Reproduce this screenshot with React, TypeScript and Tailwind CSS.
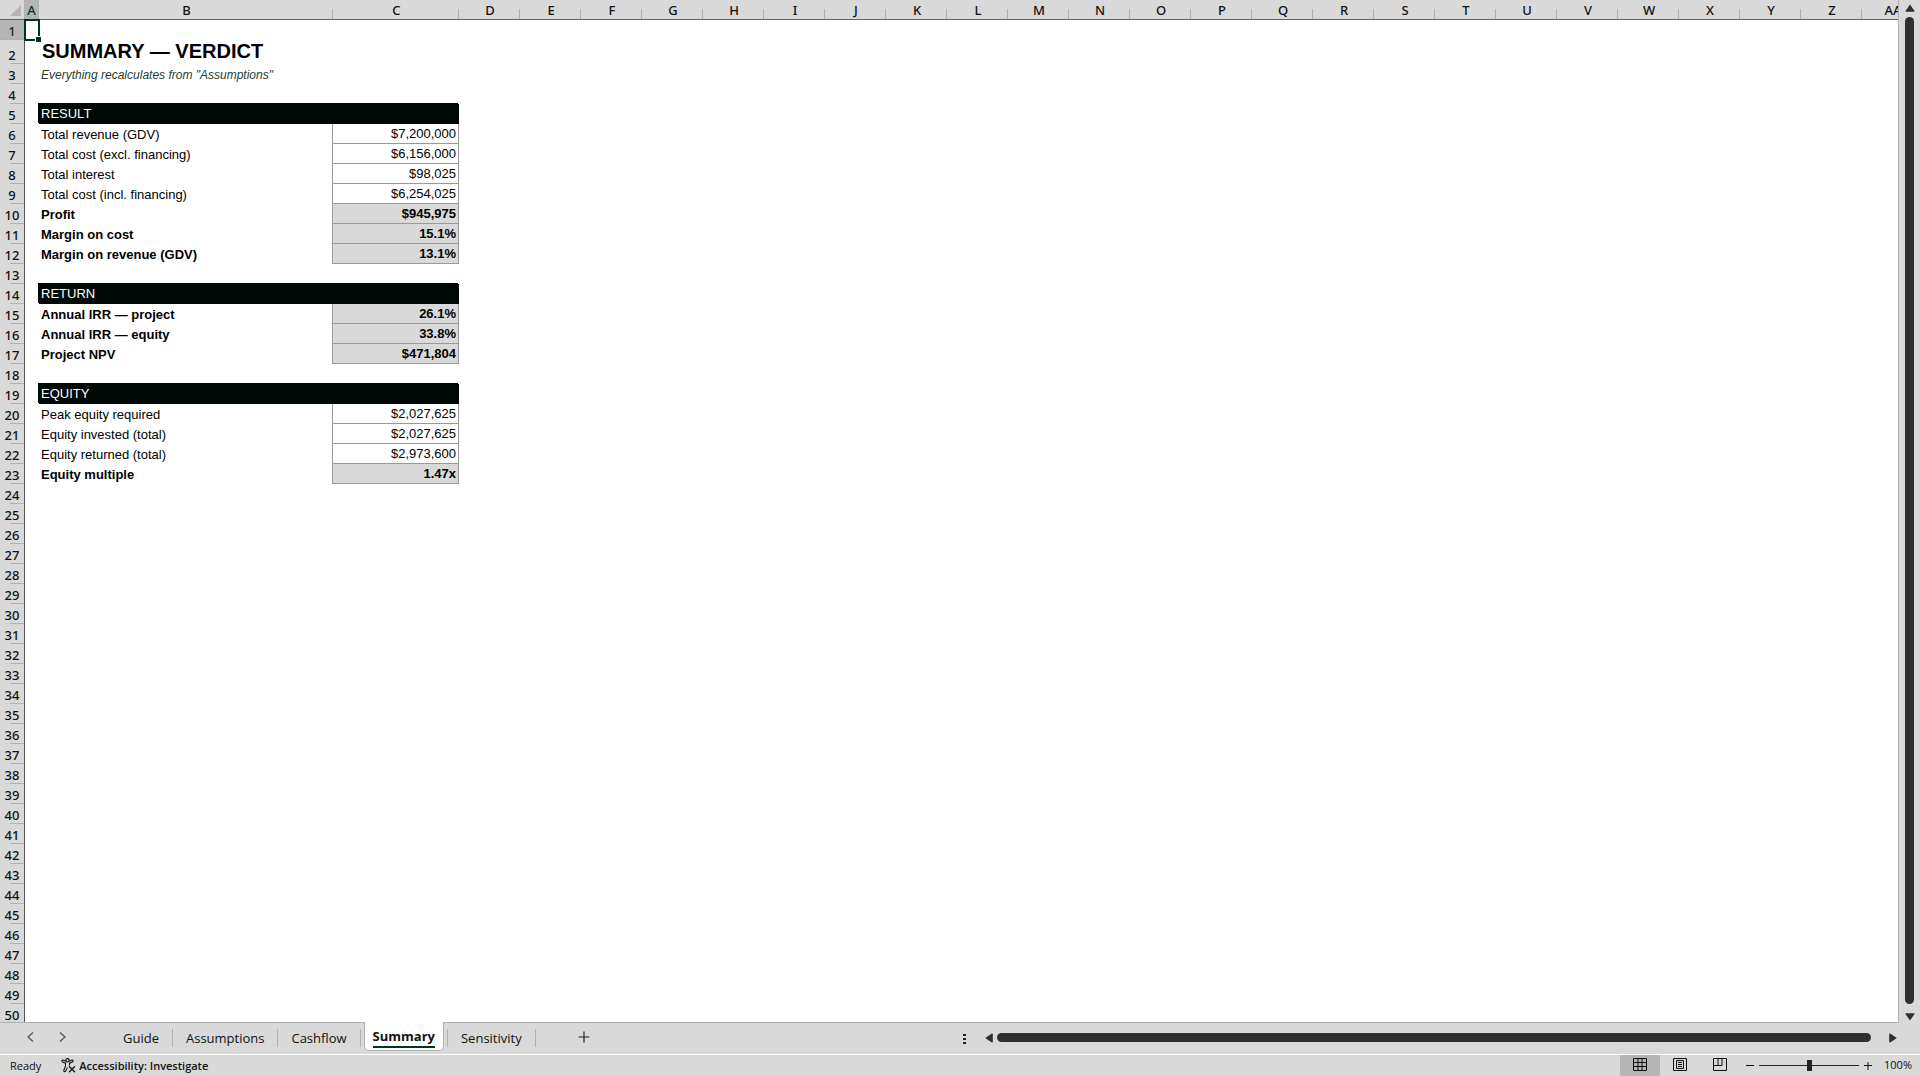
import { useState } from 'react'
import clsx from 'clsx'

type RowKind = 'title' | 'note' | 'section' | 'value' | 'total'

interface SheetRow {
  kind: RowKind
  label: string
  value?: string
}

const ROW_COUNT = 50

const ROWS: Record<number, SheetRow> = {
  2: { kind: 'title', label: 'SUMMARY — VERDICT' },
  3: { kind: 'note', label: 'Everything recalculates from "Assumptions"' },
  5: { kind: 'section', label: 'RESULT' },
  6: { kind: 'value', label: 'Total revenue (GDV)', value: '$7,200,000' },
  7: { kind: 'value', label: 'Total cost (excl. financing)', value: '$6,156,000' },
  8: { kind: 'value', label: 'Total interest', value: '$98,025' },
  9: { kind: 'value', label: 'Total cost (incl. financing)', value: '$6,254,025' },
  10: { kind: 'total', label: 'Profit', value: '$945,975' },
  11: { kind: 'total', label: 'Margin on cost', value: '15.1%' },
  12: { kind: 'total', label: 'Margin on revenue (GDV)', value: '13.1%' },
  14: { kind: 'section', label: 'RETURN' },
  15: { kind: 'total', label: 'Annual IRR — project', value: '26.1%' },
  16: { kind: 'total', label: 'Annual IRR — equity', value: '33.8%' },
  17: { kind: 'total', label: 'Project NPV', value: '$471,804' },
  19: { kind: 'section', label: 'EQUITY' },
  20: { kind: 'value', label: 'Peak equity required', value: '$2,027,625' },
  21: { kind: 'value', label: 'Equity invested (total)', value: '$2,027,625' },
  22: { kind: 'value', label: 'Equity returned (total)', value: '$2,973,600' },
  23: { kind: 'total', label: 'Equity multiple', value: '1.47x' },
}

const COLUMNS = [...'ABCDEFGHIJKLMNOPQRSTUVWXYZ', 'AA']
const TABS = ['Guide', 'Assumptions', 'Cashflow', 'Summary', 'Sensitivity']

function columnWidth(name: string) {
  if (name === 'A') return 'w-[14px]'
  if (name === 'B') return 'w-[294px]'
  if (name === 'C') return 'w-[126px]'
  return 'w-[61px]'
}

function ColumnHeader({ name }: { name: string }) {
  const active = name === 'A'
  return (
    <th
      scope="col"
      className={clsx(
        'h-5 border-b p-0 font-medium',
        active ? 'border-[#04351a] bg-[#b5b5b5] text-[#04351a]' : 'border-[#666]'
      )}
    >
      <div className="flex h-[19px] items-end">
        <span className={clsx('flex-1 text-center leading-[18px]', !active && 'pl-[2px]')}>{name}</span>
        <span className={clsx('w-px bg-[#b0b0b0]', active ? 'h-full' : 'h-[10px]')} />
      </div>
    </th>
  )
}

function RowHeader({ index }: { index: number }) {
  const active = index === 1
  return (
    <th
      scope="row"
      className={clsx(
        "border-r p-0 align-bottom font-['Noto_Sans',sans-serif] font-medium",
        active ? 'border-[#04351a] bg-[#b5b5b5] text-[#04351a]' : 'border-[#555] bg-[#d9d9d9] text-[#111]'
      )}
    >
      <div className="flex h-5 flex-col items-end justify-end">
        <span className="h-[19px] w-full text-center leading-[22px]">{index}</span>
        <span className={clsx('h-px shrink-0 bg-[#b0b0b0]', active ? 'w-full' : 'w-[14px]')} />
      </div>
    </th>
  )
}

function SheetCells({ row }: { row?: SheetRow }) {
  if (!row) {
    return (
      <>
        <td />
        <td />
      </>
    )
  }

  if (row.kind === 'title' || row.kind === 'note') {
    return (
      <td
        colSpan={2}
        className={clsx(
          'p-0 align-top whitespace-nowrap',
          row.kind === 'title'
            ? 'pl-[3px] text-[20px] leading-[22px] font-bold'
            : 'pl-[2px] text-[12px] leading-[22px] text-[#25402f] italic'
        )}
      >
        <div className={row.kind === 'note' ? 'h-5' : 'h-6'}>{row.label}</div>
      </td>
    )
  }

  if (row.kind === 'section') {
    return (
      <td
        colSpan={2}
        className="bg-[#000806] p-0 pl-[2px] text-[13px] leading-5 text-white shadow-[-1px_-1px_0_#000806]"
      >
        {row.label}
      </td>
    )
  }

  const total = row.kind === 'total'
  return (
    <>
      <td className={clsx('border-r border-[#999] p-0 pt-px pl-[2px] leading-[19px]', total && 'font-bold')}>
        {row.label}
      </td>
      <td
        className={clsx(
          'border-r border-b border-[#999] p-0 pr-[2px] text-right leading-[19px]',
          total ? 'bg-[#d9d9d9] font-bold' : 'font-normal'
        )}
      >
        {row.value}
      </td>
    </>
  )
}

function Sheet() {
  return (
    <div className="min-w-0 flex-1 overflow-hidden border-r border-b border-[#b0b0b0] bg-white">
      <table className="w-[1923px] table-fixed border-separate border-spacing-0 font-['Liberation_Sans',Arial,sans-serif] text-[13px] text-black">
        <colgroup>
          <col className="w-[25px]" />
          {COLUMNS.map((name) => (
            <col key={name} className={columnWidth(name)} />
          ))}
        </colgroup>
        <thead className="bg-[#d9d9d9] font-['Noto_Sans',sans-serif] text-[13px] text-[#111]">
          <tr>
            <td className="h-5 border-r border-b border-[#b0b0b0] border-b-[#666] p-0">
              <svg viewBox="0 0 24 19" className="h-[19px] w-6" aria-hidden="true">
                <path d="M21 5v11H10z" fill="#b5b5b5" />
              </svg>
            </td>
            {COLUMNS.map((name) => (
              <ColumnHeader key={name} name={name} />
            ))}
          </tr>
        </thead>
        <tbody>
          {Array.from({ length: ROW_COUNT }, (_, i) => i + 1).map((n) => (
            <tr key={n} className={n === 2 ? 'h-6' : 'h-5'}>
              <RowHeader index={n} />
              <td className="relative p-0">
                {n === 1 && (
                  <span className="absolute -inset-px border-2 border-[#04351a]">
                    <span className="absolute -right-[3px] -bottom-[3px] size-[6px] border-t border-l border-white bg-[#04351a]" />
                  </span>
                )}
              </td>
              <SheetCells row={ROWS[n]} />
              <td colSpan={24} />
            </tr>
          ))}
        </tbody>
      </table>
    </div>
  )
}

function VerticalScrollbar() {
  return (
    <div className="flex w-[21px] flex-col items-center pt-1 pb-[2px]">
      <button type="button" aria-label="Scroll up">
        <svg viewBox="0 0 10 8" className="h-2 w-[10px]" fill="#2f2f2f">
          <path d="M5 .5 9.5 7q.2.8-.7.8H1.2Q.3 7.8.5 7z" />
        </svg>
      </button>
      <div className="mt-[5px] mb-[9px] w-[9px] flex-1 rounded-full bg-[#2f2f2f]" />
      <button type="button" aria-label="Scroll down">
        <svg viewBox="0 0 10 8" className="h-2 w-[10px]" fill="#2f2f2f">
          <path d="M5 7.5.5 1q-.2-.8.7-.8h7.6q.9 0 .7.8z" />
        </svg>
      </button>
    </div>
  )
}

function SheetTabs() {
  const [active, setActive] = useState('Summary')

  return (
    <div className="flex h-8 border-b border-white text-[13px]">
      <div className="flex w-1/2 items-start">
        <div className="flex w-[110px] gap-[23px] pt-2 pl-[25px]">
          <button type="button" aria-label="Previous sheet">
            <svg viewBox="0 0 10 12" className="h-3 w-[10px]" fill="none" stroke="#555" strokeWidth="1.3">
              <path d="M8 1.500 3 6l5 4.500" />
            </svg>
          </button>
          <button type="button" aria-label="Next sheet">
            <svg viewBox="0 0 10 12" className="h-3 w-[10px]" fill="none" stroke="#555" strokeWidth="1.3">
              <path d="M2 1.500 7 6l-5 4.500" />
            </svg>
          </button>
        </div>
        {TABS.map((tab) => (
          <div key={tab} className="flex items-start">
            {tab === active ? (
              <button
                type="button"
                className="mx-[3px] -mt-px h-[29px] rounded-b-[5px] border border-t-0 border-[#b0b0b0] bg-white px-2 font-bold"
              >
                <span className="block h-[23px] border-b-2 border-[#04351a] leading-[22px]">{tab}</span>
              </button>
            ) : (
              <button type="button" className="px-[13px] pt-[5px] leading-5" onClick={() => setActive(tab)}>
                {tab}
              </button>
            )}
            <span className="mt-[6px] h-[18px] w-px bg-[#b0b0b0]" />
          </div>
        ))}
        <button type="button" aria-label="New sheet" className="ml-[42px] pt-2">
          <svg viewBox="0 0 12 12" className="size-3" stroke="#222" strokeWidth="1.2">
            <path d="M6 .5v11M.5 6h11" />
          </svg>
        </button>
      </div>
      <div className="flex flex-1 items-center pr-[23px] pb-[2px]">
        <svg viewBox="0 0 3 11" className="mt-1 ml-[3px] h-[11px] w-[3px]" fill="#222" aria-hidden="true">
          <path d="M0 0h3v2H0zM0 4h3v2H0zM0 8h3v2H0z" />
        </svg>
        <button type="button" aria-label="Scroll left" className="ml-[19px]">
          <svg viewBox="0 0 8 10" className="h-[10px] w-2" fill="#2f2f2f">
            <path d="M.2 5 6.800.5q1-.2 1 .7v7.600q0 .9-1 .7z" />
          </svg>
        </button>
        <div className="mr-[18px] ml-1 h-[9px] flex-1 rounded-full bg-[#2f2f2f]" />
        <button type="button" aria-label="Scroll right">
          <svg viewBox="0 0 8 10" className="h-[10px] w-2" fill="#2f2f2f">
            <path d="M7.800 5 1.200.5q-1-.2-1 .7v7.600q0 .9 1 .7z" />
          </svg>
        </button>
      </div>
    </div>
  )
}

function StatusBar() {
  return (
    <footer className="flex h-[21px] items-stretch text-[11px] leading-[22px]">
      <span className="pl-[10px]">Ready</span>
      <button type="button" className="ml-5 flex items-center gap-[3px] leading-5 font-semibold">
        <svg viewBox="0 0 15 15" className="size-[15px]" fill="none" stroke="#111" strokeWidth="1.1">
          <circle cx="6.500" cy="2.300" r="1.700" />
          <path d="M4.800 3.200 2 2.100C.8 1.800.4 3.400 1.500 3.900L4.500 5.200V8L2.800 12.300c-.3 1.300 1.200 1.800 1.800.7L6.500 9.500M8.200 3.200 11 2.100c1.200-.3 1.600 1.300.5 1.800L8.500 5.200V7.500" />
          <path d="m8 8.200 6 6M14 8.200l-6 6" strokeWidth="1.300" />
        </svg>
        Accessibility: Investigate
      </button>
      <div className="ml-auto flex">
        <button type="button" aria-label="Normal view" className="flex w-10 items-start justify-center bg-[#b5b5b5] pt-[3px]">
          <svg viewBox="0 0 14 14" className="size-[14px]" fill="none" stroke="#111">
            <path d="M.5.5h13v12h-13zM5 .5v12M9 .5v12M.5 4.500h13M.5 8.500h13" />
          </svg>
        </button>
        <button type="button" aria-label="Page layout" className="flex w-10 items-start justify-center pt-[3px]">
          <svg viewBox="0 0 14 14" className="size-[14px]" fill="none" stroke="#111">
            <path d="M.5.5h13v12h-13zM3.500 2.500h7v8h-7zM5 4.500h4M5 6.500h4M5 8.500h4" />
          </svg>
        </button>
        <button type="button" aria-label="Page break preview" className="flex w-10 items-start justify-center pt-[3px]">
          <svg viewBox="0 0 14 14" className="size-[14px]" fill="none" stroke="#111">
            <path d="M.5.5h13v12h-13zM.5 7.500h8.500v-7M5 .5v7" />
          </svg>
        </button>
        <button type="button" aria-label="Zoom out" className="ml-[6px]">
          <svg viewBox="0 0 8 8" className="size-2" stroke="#111">
            <path d="M0 3.500h8" />
          </svg>
        </button>
        <input
          type="range"
          aria-label="Zoom"
          min={0}
          max={200}
          defaultValue={100}
          className="mx-[5px] h-[21px] w-[100px] appearance-none bg-[linear-gradient(#222,#222)] bg-[length:100%_1px] bg-center bg-no-repeat [&::-webkit-slider-thumb]:h-[11px] [&::-webkit-slider-thumb]:w-[5px] [&::-webkit-slider-thumb]:appearance-none [&::-webkit-slider-thumb]:bg-[#222]"
        />
        <button type="button" aria-label="Zoom in">
          <svg viewBox="0 0 8 8" className="size-2" stroke="#111">
            <path d="M0 3.500h8M4 0v8" />
          </svg>
        </button>
        <span className="w-12 pr-2 text-right leading-5">100%</span>
      </div>
    </footer>
  )
}

export default function App() {
  return (
    <div className="flex h-screen flex-col overflow-hidden bg-[#d9d9d9] font-['Open_Sans','Noto_Sans',sans-serif] text-[#111]">
      <div className="flex min-h-0 flex-1">
        <Sheet />
        <VerticalScrollbar />
      </div>
      <SheetTabs />
      <StatusBar />
    </div>
  )
}
